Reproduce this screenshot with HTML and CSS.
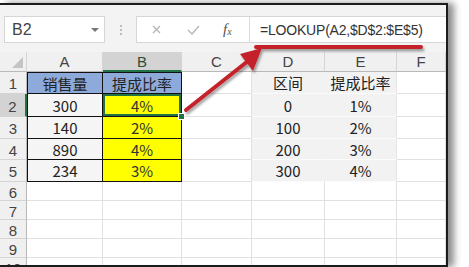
FILE: index.html
```html
<!DOCTYPE html>
<html lang="zh-CN">
<head>
    <meta charset="UTF-8">
    <title>LOOKUP</title>
    <link rel="stylesheet" href="styles.css">
</head>
<body>
    <div class="shot">
        <div class="formula-bar">
            <div class="name-box">
                <span>B2</span>
                <i class="caret"></i>
            </div>
            <div class="dots">
                <svg width="4" height="12" viewBox="0 0 4 12"><circle cx="2" cy="2" r="1" fill="#aaa"/><circle cx="2" cy="6" r="1" fill="#aaa"/><circle cx="2" cy="10" r="1" fill="#aaa"/></svg>
            </div>
            <div class="fx-box">
                <div class="btns">
                    <svg class="ico-x" width="9" height="9" viewBox="0 0 9 9"><path d="M1 1L8 8M8 1L1 8" stroke="#b5b5b5" stroke-width="1.3"/></svg>
                    <svg class="ico-ok" width="13" height="10" viewBox="0 0 13 10"><path d="M1 5L5 9L12 1" stroke="#b5b5b5" stroke-width="1.3" fill="none"/></svg>
                    <span class="fx">f<span class="fx-x">x</span></span>
                </div>
                <div class="formula">=LOOKUP(A2,$D$2:$E$5)</div>
            </div>
        </div>

        <div class="sheet">
            <div class="h corner"></div>
            <div class="h">A</div>
            <div class="h on">B</div>
            <div class="h">C</div>
            <div class="h">D</div>
            <div class="h">E</div>
            <div class="h">F</div>

            <div class="rh">1</div>
            <div class="c bk top left blue">销售量</div>
            <div class="c bk top blue">提成比率</div>
            <div class="c"></div>
            <div class="c tbl">区间</div>
            <div class="c tbl e">提成比率</div>
            <div class="c"></div>

            <div class="rh on">2</div>
            <div class="c bk left gray">300</div>
            <div class="c bk yel sel">4%</div>
            <div class="c"></div>
            <div class="c tbl">0</div>
            <div class="c tbl e">1%</div>
            <div class="c"></div>

            <div class="rh">3</div>
            <div class="c bk left gray">140</div>
            <div class="c bk yel">2%</div>
            <div class="c"></div>
            <div class="c tbl">100</div>
            <div class="c tbl e">2%</div>
            <div class="c"></div>

            <div class="rh">4</div>
            <div class="c bk left gray">890</div>
            <div class="c bk yel">4%</div>
            <div class="c"></div>
            <div class="c tbl">200</div>
            <div class="c tbl e">3%</div>
            <div class="c"></div>

            <div class="rh">5</div>
            <div class="c bk left gray">234</div>
            <div class="c bk yel">3%</div>
            <div class="c"></div>
            <div class="c tbl">300</div>
            <div class="c tbl e">4%</div>
            <div class="c"></div>

            <div class="rh">6</div>
            <div class="c"></div><div class="c"></div><div class="c"></div><div class="c"></div><div class="c"></div><div class="c"></div>
            <div class="rh">7</div>
            <div class="c"></div><div class="c"></div><div class="c"></div><div class="c"></div><div class="c"></div><div class="c"></div>
            <div class="rh">8</div>
            <div class="c"></div><div class="c"></div><div class="c"></div><div class="c"></div><div class="c"></div><div class="c"></div>
            <div class="rh">9</div>
            <div class="c"></div><div class="c"></div><div class="c"></div><div class="c"></div><div class="c"></div><div class="c"></div>
            <div class="rh">10</div>
            <div class="c"></div><div class="c"></div><div class="c"></div><div class="c"></div><div class="c"></div><div class="c"></div>
        </div>
    </div>

    <!-- red marks drawn over the screenshot -->
    <svg class="marks" width="469" height="267" viewBox="0 0 469 267">
        <defs>
            <filter id="sh" x="-20%" y="-20%" width="140%" height="160%">
                <feDropShadow dx="1.5" dy="2.5" stdDeviation="1.2" flood-color="#000" flood-opacity="0.35"/>
            </filter>
        </defs>
        <g filter="url(#sh)" fill="#c4242b">
            <rect x="254" y="45" width="169" height="4" rx="2"/>
            <line x1="186" y1="110" x2="248" y2="61" stroke="#c4242b" stroke-width="4" stroke-linecap="round"/>
            <polygon points="262,48 240,54 253,71"/>
        </g>
    </svg>
</body>
</html>
```

FILE: styles.css
```css
body {
    margin: 0;
    width: 469px;
    height: 267px;
    overflow: hidden;
    position: relative;
    background-color: #fff;
    font-family: "Liberation Sans", Arial, sans-serif;
}

.shot {
    margin-top: 3px;
    width: 446px;
    height: 260px;
    border: 2px solid #1c1c1c;
    border-left: none;
    overflow: hidden;
    background-color: #fff;
    box-shadow: 6px 0 7px rgba(0, 0, 0, 0.45);
}

/* barra de formulas */
.formula-bar {
    display: flex;
    align-items: flex-start;
    height: 47px;
    padding: 11px 0 0 4px;
    box-sizing: border-box;
    background-color: #f3f3f3;
}

.name-box {
    width: 101px;
    height: 27px;
    box-sizing: border-box;
    background-color: #fff;
    border: 1px solid #d6d6d6;
    display: flex;
    align-items: center;
    justify-content: space-between;
    padding: 0 5px 0 7px;
    font-size: 16px;
    color: #444;
}

.caret {
    width: 0;
    height: 0;
    border-left: 4px solid transparent;
    border-right: 4px solid transparent;
    border-top: 4px solid #777;
}

.dots {
    width: 31px;
    height: 27px;
    display: flex;
    align-items: center;
    justify-content: center;
}

.fx-box {
    flex: 1;
    height: 27px;
    box-sizing: border-box;
    background-color: #fff;
    border: 1px solid #d6d6d6;
    border-right: none;
    display: flex;
    align-items: center;
}

.btns {
    width: 113px;
    height: 100%;
    box-sizing: border-box;
    border-right: 1px solid #dcdcdc;
    display: flex;
    align-items: center;
    padding-left: 15px;
}

.ico-x {
    margin-right: 26px;
}

.ico-ok {
    margin-right: 23px;
}

.fx {
    font-family: "Liberation Serif", serif;
    font-style: italic;
    font-size: 15px;
    color: #555;
}

.fx-x {
    font-size: 10px;
    position: relative;
    top: 1px;
}

.formula {
    padding-left: 10px;
    font-size: 14px;
    color: #333;
    letter-spacing: -0.2px;
}

/* hoja */
.sheet {
    display: grid;
    grid-template-columns: 27px 76px 79px 70px 73px 72px 49px;
    grid-template-rows: 20px 22px 23px 22px 21px 22px 19px 19px 19px 19px 19px;
    font-family: "Noto Sans CJK SC", "Liberation Sans", sans-serif;
}

.sheet > div {
    box-sizing: border-box;
    display: flex;
    align-items: center;
    justify-content: center;
}

.h {
    background-color: #f0f0f0;
    border-right: 1px solid #d4d4d4;
    border-bottom: 1px solid #b8b8b8;
    font-family: "Liberation Sans", Arial, sans-serif;
    font-size: 15px;
    color: #444;
}

.h.on {
    background-color: #d3d3d3;
    border-bottom: 2px solid #217346;
    color: #2b4f38;
}

.corner {
    position: relative;
}

.corner::after {
    content: "";
    position: absolute;
    right: 3px;
    bottom: 3px;
    border-left: 11px solid transparent;
    border-bottom: 11px solid #c4c4c4;
}

.rh {
    background-color: #f0f0f0;
    border-right: 1px solid #b8b8b8;
    border-bottom: 1px solid #d4d4d4;
    font-family: "Liberation Sans", Arial, sans-serif;
    font-size: 15px;
    color: #444;
    padding-top: 2px;
}

.rh.on {
    background-color: #d3d3d3;
    border-right: 2px solid #217346;
}

.c {
    border-right: 1px solid #e0e0e0;
    border-bottom: 1px solid #e0e0e0;
    font-size: 15px;
    color: #222;
}

.bk {
    border-right: 1px solid #111;
    border-bottom: 1px solid #111;
}

.top {
    border-top: 1px solid #111;
}

.left {
    border-left: 1px solid #111;
}

.blue {
    background-color: #8eaadb;
}

.gray {
    background-color: #f5f5f5;
}

.yel {
    background-color: #ffff00;
    color: #333;
}

.sel {
    position: relative;
    box-shadow: inset 0 0 0 2px #217346;
}

.sel::after {
    content: "";
    position: absolute;
    right: -4px;
    bottom: -4px;
    width: 5px;
    height: 5px;
    background-color: #217346;
    border: 1px solid #fff;
}

.tbl {
    background-color: #f2f2f2;
    border-right-color: #f2f2f2;
    border-bottom-color: #fbfbfb;
}

.tbl.e {
    border-right-color: #e6e6e6;
}

.marks {
    position: absolute;
    left: 0;
    top: 0;
    pointer-events: none;
}
```
